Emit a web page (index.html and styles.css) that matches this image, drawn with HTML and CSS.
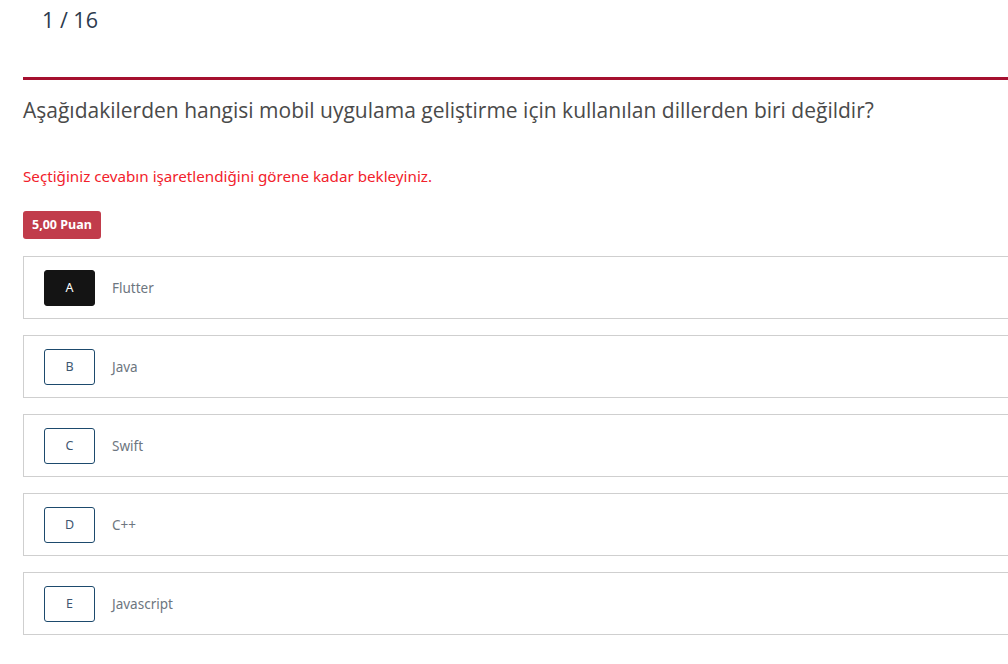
FILE: index.html
```html
<!DOCTYPE html>
<html lang="tr">
<head>
<meta charset="utf-8">
<link rel="stylesheet" href="styles.css">
</head>
<body>
<div class="page">
  <div class="counter">1 / 16</div>
  <div class="rule"></div>
  <h1 class="question">Aşağıdakilerden hangisi mobil uygulama geliştirme için kullanılan dillerden biri değildir?</h1>
  <p class="warn">Seçtiğiniz cevabın işaretlendiğini görene kadar bekleyiniz.</p>
  <span class="badge">5,00 Puan</span>
  <ul class="options">
    <li class="option"><span class="letter selected">A</span><span class="label">Flutter</span></li>
    <li class="option"><span class="letter">B</span><span class="label">Java</span></li>
    <li class="option"><span class="letter">C</span><span class="label">Swift</span></li>
    <li class="option"><span class="letter">D</span><span class="label">C++</span></li>
    <li class="option"><span class="letter">E</span><span class="label">Javascript</span></li>
  </ul>
</div>
</body>
</html>
```
FILE: styles.css
```css
html, body {
  margin: 0;
  padding: 0;
  background: #fff;
  overflow: hidden;
}
.page {
  width: 1100px;
  padding-left: 23px;
  font-family: "Open Sans", "Liberation Sans", sans-serif;
}
.counter {
  font-size: 21.5px;
  line-height: 30px;
  color: #2c3a4d;
  padding: 5px 0 0 19px;
}
.rule {
  height: 3px;
  background: #a5102f;
  margin-top: 42px;
}
.question {
  margin: 15px 0 0;
  font-size: 21px;
  font-weight: 400;
  line-height: 30px;
  color: #4a4a4a;
}
.warn {
  margin: 41px 0 0;
  font-family: "Noto Sans", "Lato", sans-serif;
  font-size: 15.2px;
  line-height: 20px;
  color: #f2212b;
}
.badge {
  display: inline-block;
  margin-top: 25px;
  height: 28px;
  line-height: 28px;
  padding: 0 9px;
  border-radius: 3px;
  background: #c13c4b;
  color: #fff;
  font-family: "Noto Sans", "Lato", sans-serif;
  font-weight: 700;
  font-size: 12.5px;
}
.options {
  list-style: none;
  margin: 17px 0 0;
  padding: 0;
  display: flex;
  flex-direction: column;
  gap: 16px;
}
.option {
  display: flex;
  align-items: center;
  height: 61px;
  border: 1px solid #cfcfcf;
  border-right: none;
  padding-left: 20px;
  font-family: "Noto Sans", "Lato", sans-serif;
}
.letter {
  display: flex;
  align-items: center;
  justify-content: center;
  width: 49px;
  height: 34px;
  border: 1px solid #1d4a6d;
  border-radius: 3px;
  font-size: 12.5px;
  color: #3e5670;
}
.letter.selected {
  background: #141414;
  border-color: #141414;
  color: #fff;
}
.label {
  margin-left: 17px;
  font-size: 13.5px;
  color: #6d7680;
}
```
